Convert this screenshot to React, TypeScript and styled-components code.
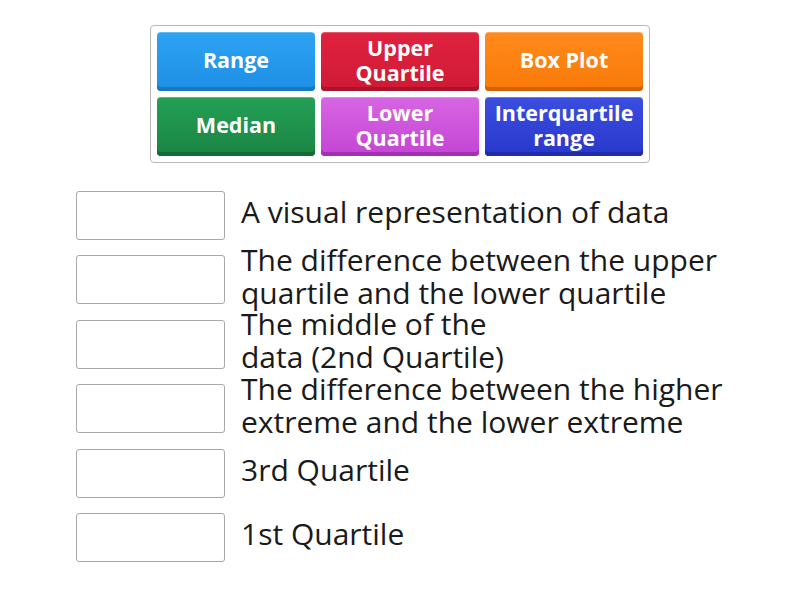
import React from "react";
import styled, { createGlobalStyle } from "styled-components";

const Global = createGlobalStyle`
  html, body { margin: 0; padding: 0; background: #ffffff; }
  body { font-family: "Open Sans", "DejaVu Sans", sans-serif; }
`;

const Page = styled.div`
  width: 800px;
  height: 600px;
  display: flex;
  flex-direction: column;
  align-items: center;
  padding-top: 25px;
  box-sizing: border-box;
`;

const Bank = styled.div`
  width: 500px;
  box-sizing: border-box;
  border: 1px solid #b8b8b8;
  border-radius: 4px;
  padding: 6px;
  display: grid;
  grid-template-columns: repeat(3, 158px);
  grid-auto-rows: 59px;
  gap: 6px;
`;

const Tile = styled.div<{ $top: string; $bottom: string; $edge: string }>`
  box-sizing: border-box;
  border-radius: 4px;
  background: linear-gradient(180deg, ${(p) => p.$top} 0%, ${(p) => p.$bottom} 100%);
  box-shadow: inset 0 -4px 0 ${(p) => p.$edge}, inset 0 1px 0 rgba(255, 255, 255, 0.25);
  color: #ffffff;
  font-weight: 700;
  font-size: 21.5px;
  line-height: 24.5px;
  display: flex;
  align-items: center;
  justify-content: center;
  text-align: center;
  padding-bottom: 2px;
`;

const List = styled.div`
  width: 800px;
  box-sizing: border-box;
  padding-left: 76px;
  margin-top: 28px;
  display: flex;
  flex-direction: column;
  gap: 15.4px;
`;

const Row = styled.div`
  display: flex;
  align-items: center;
  gap: 16px;
  height: 49px;
`;

const Slot = styled.div`
  flex: none;
  width: 149px;
  height: 49px;
  box-sizing: border-box;
  border: 1px solid #a8a8a8;
  border-radius: 3px;
  background: #ffffff;
`;

const Clue = styled.div`
  font-size: 30px;
  line-height: 33px;
  color: #1a1a1a;
  margin-top: -8px;
  white-space: nowrap;
`;

const tiles = [
  { label: "Range", top: "#2ea3f2", bottom: "#1d8fe6", edge: "#1a78c2" },
  { label: <>Upper<br />Quartile</>, top: "#e0223f", bottom: "#cf1a35", edge: "#a8142b" },
  { label: "Box Plot", top: "#ff8a1c", bottom: "#f97a08", edge: "#d06404" },
  { label: "Median", top: "#24a055", bottom: "#1a8544", edge: "#146a36" },
  { label: <>Lower<br />Quartile</>, top: "#d766e3", bottom: "#c444d4", edge: "#a32fb3" },
  { label: <>Interquartile<br />range</>, top: "#3b4ee0", bottom: "#2838cc", edge: "#1f2ba8" },
];

const clues: React.ReactNode[] = [
  "A visual representation of data",
  <>The difference between the upper<br />quartile and the lower quartile</>,
  <>The middle of the<br />data (2nd Quartile)</>,
  <>The difference between the higher<br />extreme and the lower extreme</>,
  "3rd Quartile",
  "1st Quartile",
];

export default function App() {
  return (
    <>
      <Global />
      <Page>
        <Bank>
          {tiles.map((t, i) => (
            <Tile key={i} $top={t.top} $bottom={t.bottom} $edge={t.edge}>
              <span>{t.label}</span>
            </Tile>
          ))}
        </Bank>
        <List>
          {clues.map((c, i) => (
            <Row key={i}>
              <Slot />
              <Clue>{c}</Clue>
            </Row>
          ))}
        </List>
      </Page>
    </>
  );
}
